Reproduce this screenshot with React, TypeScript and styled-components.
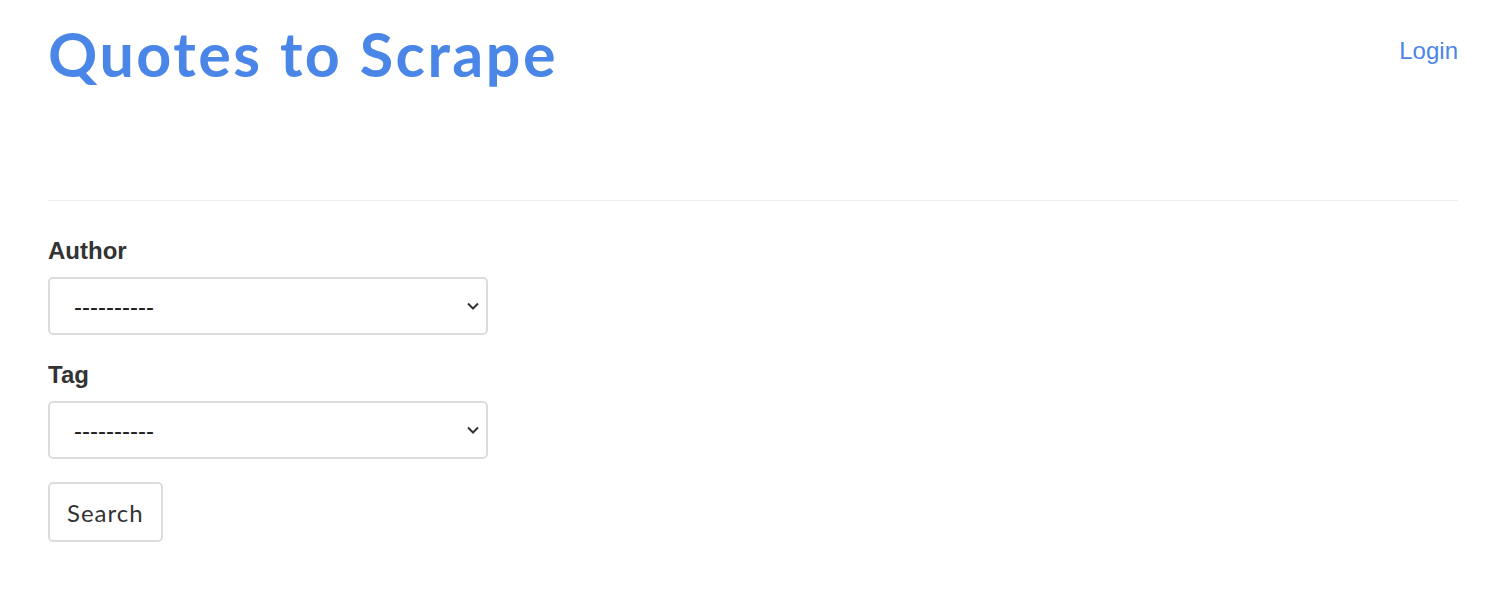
import React from "react";
import styled, { createGlobalStyle } from "styled-components";

const GlobalStyle = createGlobalStyle`
  html, body {
    margin: 0;
    padding: 0;
    background: #ffffff;
  }
  body {
    font-family: "Liberation Sans", Arial, sans-serif;
    color: #333333;
  }
  * { box-sizing: border-box; }
`;

const Page = styled.div`
  padding: 0 33px 0 48px;
`;

const Header = styled.header`
  display: flex;
  justify-content: space-between;
  align-items: flex-start;
  height: 200px;
`;

const Title = styled.h1`
  margin: 17px 0 0 0;
  font-family: "Lato", "Open Sans", sans-serif;
  font-weight: 700;
  font-size: 61px;
  line-height: 1.2;
  letter-spacing: 2.5px;
`;

const TitleLink = styled.a`
  color: #4a86e8;
  text-decoration: none;
`;

const LoginLine = styled.p`
  margin: 34px 0 0 0;
  font-size: 24px;
  line-height: 34px;
`;

const LoginLink = styled.a`
  color: #4a86e8;
  text-decoration: none;
`;

const Rule = styled.hr`
  margin: 0;
  border: 0;
  border-top: 1px solid #eeeeee;
  height: 0;
`;

const Form = styled.form`
  display: flex;
  flex-direction: column;
  align-items: flex-start;
  width: 440px;
  padding-top: 33px;
`;

const Group = styled.div`
  display: flex;
  flex-direction: column;
  width: 100%;
  margin-bottom: 23px;
`;

const Label = styled.label`
  font-weight: 700;
  font-size: 24px;
  line-height: 34px;
  color: #333333;
  margin-bottom: 9px;
`;

const SelectWrap = styled.div`
  position: relative;
  width: 100%;
`;

const Select = styled.select`
  appearance: none;
  -webkit-appearance: none;
  width: 100%;
  height: 58px;
  padding: 0 20px 0 24px;
  border: 2px solid #dcdcdc;
  border-radius: 5px;
  background: #ffffff;
  font-family: "Liberation Sans", Arial, sans-serif;
  font-size: 24px;
  color: #222222;
  outline: none;
`;

const Chevron = styled.svg`
  position: absolute;
  right: 9px;
  top: 25px;
  width: 12px;
  height: 8px;
  pointer-events: none;
`;

const Button = styled.button`
  height: 60px;
  padding: 0 17px;
  border: 2px solid #dcdcdc;
  border-radius: 5px;
  background: #ffffff;
  font-family: "Lato", "Open Sans", sans-serif;
  font-size: 24px;
  font-weight: 400;
  letter-spacing: 1px;
  color: #333333;
  cursor: pointer;
`;

const FilterSelect: React.FC<{ id: string }> = ({ id }) => (
  <SelectWrap>
    <Select id={id} defaultValue="">
      <option value="">----------</option>
    </Select>
    <Chevron viewBox="0 0 12 8">
      <path d="M1 1.5 L6 6.5 L11 1.5" fill="none" stroke="#333" strokeWidth="2" />
    </Chevron>
  </SelectWrap>
);

export default function App() {
  return (
    <>
      <GlobalStyle />
      <Page>
        <Header>
          <Title>
            <TitleLink href="#">Quotes to Scrape</TitleLink>
          </Title>
          <LoginLine>
            <LoginLink href="#">Login</LoginLink>
          </LoginLine>
        </Header>
        <Rule />
        <Form onSubmit={(e) => e.preventDefault()}>
          <Group>
            <Label htmlFor="author">Author</Label>
            <FilterSelect id="author" />
          </Group>
          <Group>
            <Label htmlFor="tag">Tag</Label>
            <FilterSelect id="tag" />
          </Group>
          <Button type="submit">Search</Button>
        </Form>
      </Page>
    </>
  );
}
